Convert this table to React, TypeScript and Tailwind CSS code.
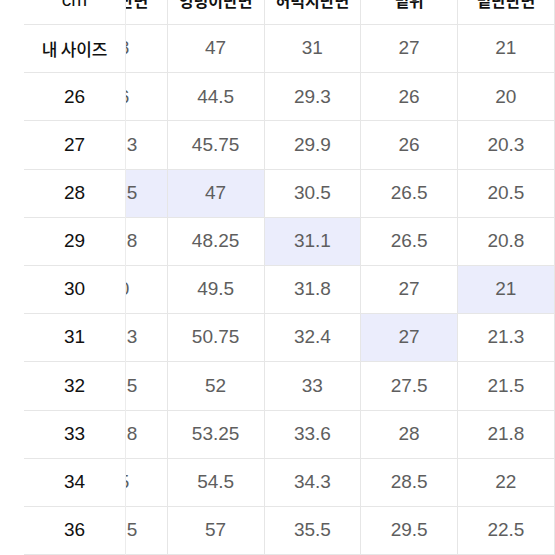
import React from "react"

const columns = ["허리단면", "엉덩이단면", "허벅지단면", "밑위", "밑단단면"]

type Row = { label: string; values: string[]; marked?: number[] }

const rows: Row[] = [
  { label: "내 사이즈", values: ["38", "47", "31", "27", "21"] },
  { label: "26", values: ["36", "44.5", "29.3", "26", "20"] },
  { label: "27", values: ["37.3", "45.75", "29.9", "26", "20.3"] },
  { label: "28", values: ["38.5", "47", "30.5", "26.5", "20.5"], marked: [0, 1] },
  { label: "29", values: ["39.8", "48.25", "31.1", "26.5", "20.8"], marked: [2] },
  { label: "30", values: ["40", "49.5", "31.8", "27", "21"], marked: [4] },
  { label: "31", values: ["41.3", "50.75", "32.4", "27", "21.3"], marked: [3] },
  { label: "32", values: ["42.5", "52", "33", "27.5", "21.5"] },
  { label: "33", values: ["43.8", "53.25", "33.6", "28", "21.8"] },
  { label: "34", values: ["45", "54.5", "34.3", "28.5", "22"] },
  { label: "36", values: ["46.5", "57", "35.5", "29.5", "22.5"] },
]

const num = "font-['Liberation_Sans','Noto_Sans_CJK_KR',sans-serif]"
const kr = "font-['Noto_Sans_CJK_KR',sans-serif]"

export default function App() {
  return (
    <div className="h-[555px] w-[555px] overflow-hidden bg-white">
      <div className="-mt-[23.2px] flex">
        {/* frozen first column */}
        <div className="relative z-10 w-[126px] shrink-0 border-r border-[#ececec] bg-white pl-6">
          <div className={`flex h-[48.2px] items-center justify-center border-b border-[#e6e6e6] text-[19px] text-[#111] ${num}`}>
            cm
          </div>
          {rows.map((row) => (
            <div
              key={row.label}
              className="flex h-[48.2px] items-center justify-center border-b border-[#e6e6e6] text-[#111]"
            >
              {row.label === "내 사이즈" ? (
                <span className={`text-[17px] font-medium tracking-[-0.2px] ${kr}`}>{row.label}</span>
              ) : (
                <span className={`text-[19px] ${num}`}>{row.label}</span>
              )}
            </div>
          ))}
        </div>

        {/* scrolled data columns */}
        <div className="min-w-0 flex-1 overflow-hidden">
          <div className="-ml-[55px] grid w-max grid-cols-[repeat(5,96.75px)]">
            {columns.map((c) => (
              <div
                key={c}
                className={`flex h-[48.2px] items-center justify-center border-r border-b border-[#e6e6e6] text-[16px] font-semibold text-[#111] ${kr}`}
              >
                {c}
              </div>
            ))}
            {rows.map((row) =>
              row.values.map((v, i) => (
                <div
                  key={row.label + i}
                  className={`flex h-[48.2px] items-center justify-center border-r border-b border-[#e6e6e6] text-[19px] text-[#5e5e5e] ${num} ${
                    row.marked?.includes(i) ? "bg-[#ebedfc]" : "bg-white"
                  }`}
                >
                  {v}
                </div>
              ))
            )}
          </div>
        </div>
      </div>
    </div>
  )
}
